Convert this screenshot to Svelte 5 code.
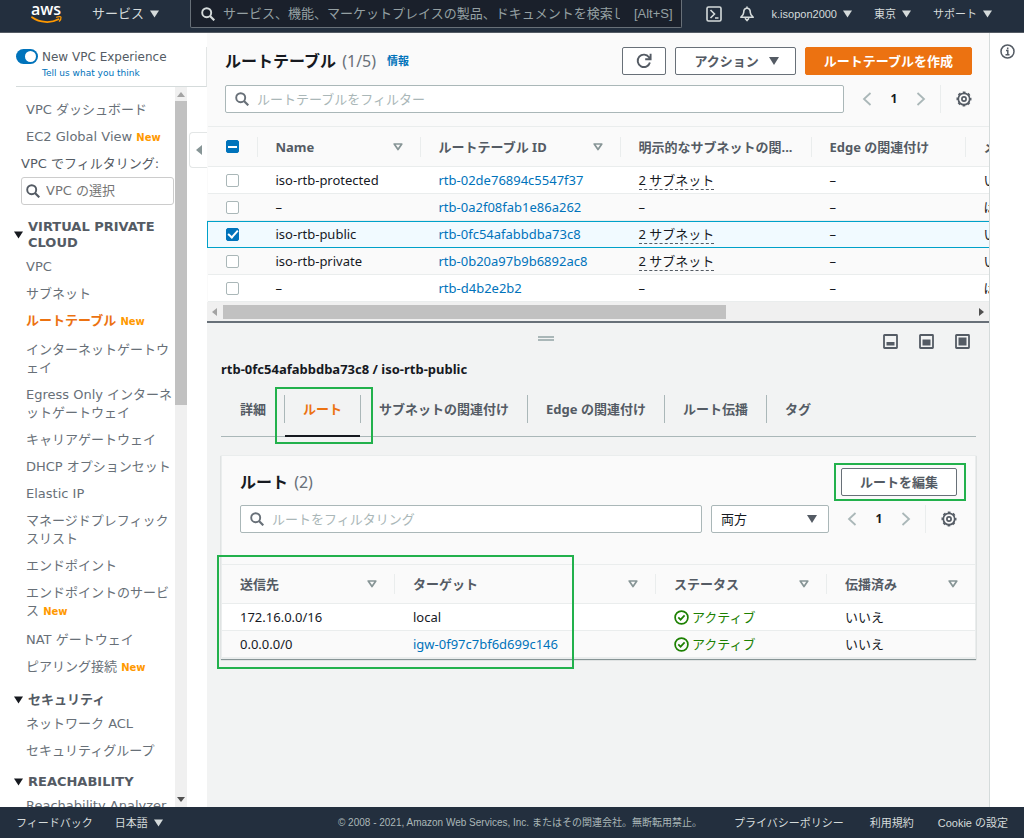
<script lang="ts">
  interface NavItem {
    label: string;
    isNew?: boolean;
    active?: boolean;
  }

  interface NavGroup {
    title: string;
    items: NavItem[];
  }

  interface RouteTable {
    name: string;
    id: string;
    subnets: string;
    edge: string;
    main: string;
    selected: boolean;
  }

  const topItems: NavItem[] = [
    { label: 'VPC ダッシュボード' },
    { label: 'EC2 Global View', isNew: true },
  ];

  const groups: NavGroup[] = [
    {
      title: 'VIRTUAL PRIVATE CLOUD',
      items: [
        { label: 'VPC' },
        { label: 'サブネット' },
        { label: 'ルートテーブル', isNew: true, active: true },
        { label: 'インターネットゲートウェイ' },
        { label: 'Egress Only インターネットゲートウェイ' },
        { label: 'キャリアゲートウェイ' },
        { label: 'DHCP オプションセット' },
        { label: 'Elastic IP' },
        { label: 'マネージドプレフィックスリスト' },
        { label: 'エンドポイント' },
        { label: 'エンドポイントのサービス', isNew: true },
        { label: 'NAT ゲートウェイ' },
        { label: 'ピアリング接続', isNew: true },
      ],
    },
    {
      title: 'セキュリティ',
      items: [{ label: 'ネットワーク ACL' }, { label: 'セキュリティグループ' }],
    },
    {
      title: 'REACHABILITY',
      items: [{ label: 'Reachability Analyzer' }],
    },
  ];

  let tables = $state<RouteTable[]>([
    { name: 'iso-rtb-protected', id: 'rtb-02de76894c5547f37', subnets: '2 サブネット', edge: '–', main: 'いいえ', selected: false },
    { name: '–', id: 'rtb-0a2f08fab1e86a262', subnets: '–', edge: '–', main: 'はい', selected: false },
    { name: 'iso-rtb-public', id: 'rtb-0fc54afabbdba73c8', subnets: '2 サブネット', edge: '–', main: 'いいえ', selected: true },
    { name: 'iso-rtb-private', id: 'rtb-0b20a97b9b6892ac8', subnets: '2 サブネット', edge: '–', main: 'いいえ', selected: false },
    { name: '–', id: 'rtb-d4b2e2b2', subnets: '–', edge: '–', main: 'はい', selected: false },
  ]);

  const routes = [
    { dest: '172.16.0.0/16', target: 'local', link: false },
    { dest: '0.0.0.0/0', target: 'igw-0f97c7bf6d699c146', link: true },
  ];

  const tabs = ['詳細', 'ルート', 'サブネットの関連付け', 'Edge の関連付け', 'ルート伝播', 'タグ'];
  let activeTab = $state('ルート');
  let newExperience = $state(true);

  const selectedCount = $derived(tables.filter((t) => t.selected).length);
</script>

{#snippet caret()}
  <svg class="caret" viewBox="0 0 10 8" width="10" height="8" aria-hidden="true"><path d="M0 0h10L5 8z" fill="currentColor" /></svg>
{/snippet}

{#snippet sortIcon()}
  <svg class="sort" viewBox="0 0 10 8" width="10" height="8" aria-hidden="true">
    <path d="M1.2 1h7.6L5 6.6z" fill="none" stroke="#879596" stroke-width="1.7" stroke-linejoin="round" />
  </svg>
{/snippet}

{#snippet searchIcon()}
  <svg viewBox="0 0 14 14" width="14" height="14" aria-hidden="true">
    <circle cx="5.7" cy="5.7" r="4.5" fill="none" stroke="currentColor" stroke-width="1.9" />
    <path d="M9 9l4.3 4.3" stroke="currentColor" stroke-width="2.2" />
  </svg>
{/snippet}

{#snippet pager()}
  <div class="pager">
    <button class="icon-btn" aria-label="前へ">
      <svg viewBox="0 0 10 14" width="10" height="14"><path d="M8.5 1L2 7l6.5 6" fill="none" stroke="#aab7b8" stroke-width="1.8" /></svg>
    </button>
    <span class="page-no">1</span>
    <button class="icon-btn" aria-label="次へ">
      <svg viewBox="0 0 10 14" width="10" height="14"><path d="M1.5 1L8 7l-6.5 6" fill="none" stroke="#aab7b8" stroke-width="1.8" /></svg>
    </button>
    <button class="icon-btn gear" aria-label="設定">
      <svg viewBox="0 0 16 16" width="16" height="16" fill="none" stroke="#545b64">
        <circle cx="8" cy="8" r="5.7" stroke-width="1.7" />
        <circle cx="8" cy="8" r="6.8" stroke-width="1.4" stroke-dasharray="2.8 2.54" stroke-dashoffset="1.4" />
        <circle cx="8" cy="8" r="2.1" stroke-width="1.7" />
      </svg>
    </button>
  </div>
{/snippet}

{#snippet navLink(item: NavItem)}
  <li class:has-new={item.isNew}>
    <a href="#nav" class:active={item.active}>{item.label}</a>
    {#if item.isNew}<span class="new">New</span>{/if}
  </li>
{/snippet}

<div class="console">
  <header class="topbar">
    <a class="logo" href="#home" aria-label="aws">
      <svg viewBox="0 0 32 26" width="32" height="26">
        <text x="0" y="15" class="logo-text">aws</text>
        <path d="M1 17.3C9 23 20 23.4 27.5 19.3" fill="none" stroke="#f90" stroke-width="1.8" stroke-linecap="round" />
        <path d="M25.5 17.2c2-.9 4.400-.7 4.500 0 .1 1-.6 3-1.700 4" fill="none" stroke="#f90" stroke-width="1.2" stroke-linecap="round" />
      </svg>
    </a>
    <button class="top-link services">サービス {@render caret()}</button>
    <label class="global-search">
      {@render searchIcon()}
      <input type="text" aria-label="検索" placeholder="サービス、機能、マーケットプレイスの製品、ドキュメントを検索します" />
      <span class="shortcut">[Alt+S]</span>
    </label>
    <div class="top-right">
      <button class="icon-btn" aria-label="CloudShell">
        <svg viewBox="0 0 16 16" width="16" height="16" fill="none" stroke="#d5dbdb" stroke-width="1.6">
          <rect x="1" y="1" width="14" height="14" rx="1.5" />
          <path d="M4.5 4l4 4-4 4M9 12h3.5" />
        </svg>
      </button>
      <button class="icon-btn" aria-label="通知">
        <svg viewBox="0 0 16 16" width="16" height="16" fill="none" stroke="#d5dbdb" stroke-width="1.6" stroke-linejoin="round">
          <path d="M8 2.2c2.5 0 3.300 2 3.300 4.300 0 2 1.200 3 2.900 4.700H1.800c1.700-1.700 2.900-2.700 2.900-4.700C4.700 4.200 5.500 2.200 8 2.200zM8 .5v2M6 12.200L8 14.600l2-2.400" />
        </svg>
      </button>
      <button class="top-link account">k.isopon2000 {@render caret()}</button>
      <button class="top-link region">東京 {@render caret()}</button>
      <button class="top-link">サポート {@render caret()}</button>
    </div>
  </header>

  <div class="body">
    <aside class="sidebar">
      <div class="experience">
        <input id="new-exp" class="switch" type="checkbox" role="switch" bind:checked={newExperience} />
        <div>
          <label for="new-exp">New VPC Experience</label>
          <a href="#feedback">Tell us what you think</a>
        </div>
      </div>
      <div class="side-main">
        <nav>
          <ul>
            {#each topItems as item (item.label)}
              {@render navLink(item)}
            {/each}
          </ul>
          <div class="vpc-filter">
            <label for="vpc-filter">VPC でフィルタリング:</label>
            <div class="vpc-box">
              {@render searchIcon()}
              <input id="vpc-filter" type="text" placeholder="VPC の選択" />
            </div>
          </div>
          {#each groups as group (group.title)}
            <h3>
              {@render caret()}
              <span>{group.title}</span>
            </h3>
            <ul>
              {#each group.items as item (item.label)}
                {@render navLink(item)}
              {/each}
            </ul>
          {/each}
        </nav>
        <div class="vscroll">
          <svg viewBox="0 0 8 5" width="8" height="5"><path d="M0 5l4-5 4 5z" fill="#a3a3a3" /></svg>
          <div class="vtrack"><div class="vthumb"></div></div>
          <svg viewBox="0 0 8 5" width="8" height="5"><path d="M0 0l4 5 4-5z" fill="#505050" /></svg>
        </div>
        <button class="fold" aria-label="サイドバーを閉じる">
          <svg viewBox="0 0 6 10" width="6" height="10"><path d="M6 0v10L0 5z" fill="#879596" /></svg>
        </button>
      </div>
    </aside>

    <main>
      <section class="list-panel">
        <div class="panel-head">
          <div class="title-row">
            <h1>ルートテーブル <span class="count">({selectedCount}/{tables.length})</span></h1>
            <a class="info" href="#info">情報</a>
            <div class="actions">
              <button class="btn refresh" aria-label="更新">
                <svg viewBox="0 0 16 16" width="16" height="16" fill="none" stroke="#545b64" stroke-width="1.9">
                  <path d="M13.9 9.400A6.200 6.200 0 1 1 13 4.300L14.200 5.800M14.600 .8v5.400H9.200" />
                </svg>
              </button>
              <button class="btn menu">アクション {@render caret()}</button>
              <button class="btn primary">ルートテーブルを作成</button>
            </div>
          </div>
          <div class="filter-row">
            <label class="filter">
              {@render searchIcon()}
              <input type="text" aria-label="フィルター" placeholder="ルートテーブルをフィルター" />
            </label>
            {@render pager()}
          </div>
        </div>

        <div class="table-clip">
          <table class="rt-table">
            <colgroup>
              <col class="c-check" /><col class="c-name" /><col class="c-id" /><col class="c-sub" /><col class="c-edge" /><col />
            </colgroup>
            <thead>
              <tr>
                <th><div class="cell"><input type="checkbox" class="check" aria-label="すべて選択" indeterminate={true} /></div></th>
                <th><div class="cell">Name {@render sortIcon()}</div></th>
                <th><div class="cell">ルートテーブル ID {@render sortIcon()}</div></th>
                <th><div class="cell">明示的なサブネットの関...</div></th>
                <th><div class="cell">Edge の関連付け</div></th>
                <th><div class="cell">メイン</div></th>
              </tr>
            </thead>
            <tbody>
              {#each tables as t (t.id)}
                <tr class:selected={t.selected}>
                  <td><input type="checkbox" class="check" aria-label={t.id} bind:checked={t.selected} /></td>
                  <td>{t.name}</td>
                  <td><a href="#rtb">{t.id}</a></td>
                  <td>{#if t.subnets !== '–'}<span class="dashed">{t.subnets}</span>{:else}–{/if}</td>
                  <td>{t.edge}</td>
                  <td>{t.main}</td>
                </tr>
              {/each}
            </tbody>
          </table>
        </div>
        <div class="hscroll">
          <svg viewBox="0 0 5 8" width="5" height="8"><path d="M5 0v8L0 4z" fill="#a3a3a3" /></svg>
          <div class="htrack"><div class="hthumb"></div></div>
          <svg viewBox="0 0 5 8" width="5" height="8"><path d="M0 0v8l5-4z" fill="#505050" /></svg>
        </div>
      </section>

      <section class="detail">
        <div class="split-bar">
          <span></span>
          <div class="grip"></div>
          <div class="split-icons">
            <button class="icon-btn" aria-label="小">
              <svg viewBox="0 0 15 15" width="15" height="15"><rect x="1" y="1" width="13" height="13" rx="0.5" fill="none" stroke="#545b64" stroke-width="1.8" /><path d="M3.5 8h8v3.5h-8z" fill="#545b64" /></svg>
            </button>
            <button class="icon-btn" aria-label="中">
              <svg viewBox="0 0 15 15" width="15" height="15"><rect x="1" y="1" width="13" height="13" rx="0.5" fill="none" stroke="#545b64" stroke-width="1.8" /><path d="M3.5 5.5h8v6h-8z" fill="#545b64" /></svg>
            </button>
            <button class="icon-btn" aria-label="大">
              <svg viewBox="0 0 15 15" width="15" height="15"><rect x="1" y="1" width="13" height="13" rx="0.5" fill="none" stroke="#545b64" stroke-width="1.8" /><path d="M3.5 3.5h8v8h-8z" fill="#545b64" /></svg>
            </button>
          </div>
        </div>
        <h2>rtb-0fc54afabbdba73c8 / iso-rtb-public</h2>

        <div class="tabs" role="tablist">
          {#each tabs as tab (tab)}
            <div class="tab">
              <button
                role="tab"
                aria-selected={tab === activeTab}
                class:active={tab === activeTab}
                onclick={() => { activeTab = tab; }}
              >{tab}</button>
              {#if tab === 'ルート'}<div class="mark mark-tab"></div>{/if}
            </div>
          {/each}
        </div>

        <div class="card">
          <div class="card-head">
            <div class="title-row">
              <h1>ルート <span class="count">({routes.length})</span></h1>
              <div class="actions">
                <button class="btn edit">ルートを編集</button>
                <div class="mark mark-edit"></div>
              </div>
            </div>
            <div class="filter-row">
              <label class="filter">
                {@render searchIcon()}
                <input type="text" aria-label="ルートをフィルタリング" placeholder="ルートをフィルタリング" />
              </label>
              <div class="select">
                <select aria-label="表示">
                  <option>両方</option>
                </select>
                {@render caret()}
              </div>
              {@render pager()}
            </div>
          </div>
          <div class="routes">
            <table>
              <colgroup><col class="r-dest" /><col class="r-target" /><col class="r-status" /><col /></colgroup>
              <thead>
                <tr>
                  <th><div class="cell">送信先 {@render sortIcon()}</div></th>
                  <th><div class="cell">ターゲット {@render sortIcon()}</div></th>
                  <th><div class="cell">ステータス {@render sortIcon()}</div></th>
                  <th><div class="cell">伝播済み {@render sortIcon()}</div></th>
                </tr>
              </thead>
              <tbody>
                {#each routes as r (r.dest)}
                  <tr>
                    <td>{r.dest}</td>
                    <td>{#if r.link}<a href="#igw">{r.target}</a>{:else}{r.target}{/if}</td>
                    <td>
                      <span class="status">
                        <svg viewBox="0 0 15 15" width="15" height="15" fill="none" stroke="#1d8102" stroke-width="1.7">
                          <circle cx="7.5" cy="7.5" r="6.4" />
                          <path d="M4.3 7.4l2.300 2.300 4-4.300" />
                        </svg>
                        アクティブ
                      </span>
                    </td>
                    <td>いいえ</td>
                  </tr>
                {/each}
              </tbody>
            </table>
            <div class="mark mark-routes"></div>
          </div>
        </div>
      </section>
    </main>

    <div class="info-rail">
      <button class="icon-btn" aria-label="情報パネル">
        <svg viewBox="0 0 15 15" width="15" height="15" fill="none" stroke="#545b64" stroke-width="1.5">
          <circle cx="7.5" cy="7.5" r="6.5" />
          <path d="M6 6.5h1.800v4M5.500 10.800h4M7.700 3.500v1.700" />
        </svg>
      </button>
    </div>
  </div>

  <footer>
    <a href="#feedback">フィードバック</a>
    <button class="top-link lang">日本語 {@render caret()}</button>
    <span class="copyright">© 2008 - 2021, Amazon Web Services, Inc. またはその関連会社。無断転用禁止。</span>
    <a class="privacy" href="#privacy">プライバシーポリシー</a>
    <a class="terms" href="#terms">利用規約</a>
    <a href="#cookie">Cookie の設定</a>
  </footer>
</div>

<style>
  :global(body) {
    margin: 0;
  }

  .console {
    display: grid;
    grid-template-rows: 33px minmax(0, 1fr) 31px;
    height: 100vh;
    overflow: hidden;
    font-family: 'Noto Sans', 'Noto Sans CJK JP', sans-serif;
    font-size: 13px;
    line-height: 18px;
    color: #16191f;
  }

  .console :global(*) {
    box-sizing: border-box;
  }

  svg {
    display: block;
    flex-shrink: 0;
  }

  a {
    color: #0073bb;
    text-decoration: none;
  }

  button,
  input,
  select {
    font: inherit;
    color: inherit;
    margin: 0;
  }

  button {
    padding: 0;
    border: none;
    background: none;
    cursor: pointer;
    white-space: nowrap;
  }

  h1,
  h2,
  h3,
  ul {
    margin: 0;
    padding: 0;
  }

  /* top bar */
  .topbar {
    display: flex;
    align-items: flex-start;
    padding: 0 32px 0 31px;
    background: #232f3e;
    border-bottom: 1px solid #545b64;
    color: #d5dbdb;
    font-family: 'Liberation Sans', 'Noto Sans CJK JP', sans-serif;
  }

  .logo svg {
    overflow: visible;
  }

  .logo-text {
    font-family: 'Open Sans', sans-serif;
    font-size: 16px;
    font-weight: 600;
    fill: #fff;
  }

  .top-link {
    display: flex;
    align-items: center;
    gap: 6px;
    height: 28px;
    font-size: 11px;
  }

  .top-link .caret {
    width: 9px;
  }

  .services {
    margin-left: 29px;
    font-size: 13px;
  }

  .global-search {
    display: flex;
    flex: 1;
    align-items: center;
    height: 28px;
    margin-left: 31px;
    padding: 0 8px 0 10px;
    background: #1a202b;
    border: 1px solid #687078;
    border-top: none;
    border-radius: 0 0 2px 2px;
  }

  .global-search input {
    flex: 1;
    min-width: 0;
    margin: 0 14px 0 8px;
    padding: 0;
    background: none;
    border: none;
    outline: none;
  }

  .global-search input::placeholder {
    color: #95a0a3;
    opacity: 1;
  }

  .shortcut {
    color: #95a0a3;
  }

  .top-right {
    display: flex;
    align-items: center;
    height: 28px;
    padding-left: 24px;
  }

  .top-right .icon-btn {
    margin-right: 17px;
  }

  .account,
  .region {
    margin-right: 22px;
  }

  .icon-btn {
    display: flex;
    align-items: center;
    justify-content: center;
  }

  .body {
    display: grid;
    grid-template-columns: 207px minmax(0, 1fr) 34px;
    min-height: 0;
  }

  /* sidebar */
  .sidebar {
    display: flex;
    flex-direction: column;
    min-height: 0;
    color: #545b64;
    font-family: 'DejaVu Sans', 'Noto Sans CJK JP', sans-serif;
    background: #fff;
  }

  .experience {
    display: flex;
    gap: 4px;
    height: 40px;
    margin: 14px 0 0 16px;
    padding-top: 2px;
    border-right: 1px solid #e3e6e6;
    border-bottom: 1px solid #d5dbdb;
  }

  .experience label,
  .experience a {
    display: block;
    font-size: 12px;
    line-height: 16px;
  }

  .experience a {
    font-size: 9px;
  }

  .switch {
    display: flex;
    flex-shrink: 0;
    appearance: none;
    width: 22px;
    height: 15px;
    padding: 2px;
    background: #0073bb;
    border-radius: 8px;
  }

  .switch::after {
    content: '';
    width: 11px;
    height: 11px;
    margin-left: auto;
    background: #fff;
    border-radius: 50%;
  }

  .side-main {
    display: grid;
    grid-template-columns: minmax(0, 1fr) 12px 20px;
    flex: 1;
    min-height: 0;
  }

  nav {
    overflow: hidden;
    padding: 14px 0 0 14px;
  }

  nav ul {
    list-style: none;
    padding-left: 12px;
  }

  nav li {
    padding-bottom: 9px;
    line-height: 18px;
  }

  nav h3 + ul .has-new {
    padding-bottom: 11px;
  }

  nav li a {
    color: #687078;
  }

  nav li a.active {
    color: #ec7211;
    font-weight: 700;
  }

  .new {
    color: #ff9900;
    font-size: 10px;
    font-weight: 700;
    line-height: 12px;
  }

  .vpc-filter {
    padding: 0 1px 14px 7px;
  }

  .vpc-filter label {
    display: block;
    margin-bottom: 4px;
  }

  .vpc-box {
    display: flex;
    align-items: center;
    gap: 6px;
    height: 28px;
    padding: 0 4px;
    border: 1px solid #ccc;
    border-radius: 3px;
  }

  .vpc-box input {
    width: 100%;
    min-width: 0;
    padding: 0;
    border: none;
    outline: none;
  }

  .vpc-box input::placeholder {
    color: #757575;
  }

  nav h3 {
    display: flex;
    align-items: center;
    gap: 5px;
    margin-bottom: 7px;
    font-size: 13px;
    line-height: 16px;
  }

  nav h3 .caret {
    width: 9px;
    color: #16191f;
  }

  nav ul + h3 {
    padding-top: 5px;
  }

  .vscroll {
    display: flex;
    flex-direction: column;
    align-items: center;
    gap: 4px;
    padding: 5px 0;
    background: #f0f0f0;
  }

  .vtrack {
    flex: 1;
    width: 100%;
  }

  .vthumb {
    height: 44%;
    background: #c1c1c1;
  }

  .fold {
    display: flex;
    align-items: center;
    height: 36px;
    margin: 45px 0 0 2px;
    padding-left: 6px;
    border: 1px solid #e3e6e6;
    border-right: none;
    border-radius: 4px 0 0 4px;
  }

  /* main */
  main {
    display: flex;
    flex-direction: column;
    min-height: 0;
    background: #f2f3f3;
    border-right: 1px solid #d5dbdb;
  }

  .list-panel {
    background: #fafafa;
    border-bottom: 2px solid #687078;
  }

  .panel-head {
    padding: 14px 17px 13px 18px;
  }

  .title-row {
    display: flex;
    align-items: center;
    height: 28px;
  }

  h1 {
    font-size: 16px;
    line-height: 24px;
    white-space: nowrap;
  }

  .count {
    margin-left: 2px;
    color: #687078;
    font-weight: 400;
  }

  .info {
    margin-left: 11px;
    font-size: 11px;
    font-weight: 700;
  }

  .actions {
    position: relative;
    display: flex;
    gap: 9px;
    margin-left: auto;
  }

  .btn {
    display: flex;
    align-items: center;
    justify-content: center;
    height: 28px;
    padding: 0 18px;
    background: #fff;
    border: 1px solid #687078;
    border-radius: 2px;
    color: #545b64;
    font-weight: 700;
  }

  .refresh {
    padding: 0 13px;
  }

  .menu {
    gap: 10px;
    padding: 0 16px 0 18px;
  }

  .primary {
    background: #ec7211;
    border-color: #ec7211;
    color: #fff;
  }

  .filter-row {
    display: flex;
    gap: 9px;
    margin-top: 10px;
  }

  .filter {
    display: flex;
    flex: 1;
    align-items: center;
    gap: 8px;
    height: 28px;
    padding: 0 9px;
    background: #fff;
    border: 1px solid #aab7b8;
    border-radius: 2px;
    color: #687078;
  }

  .filter input {
    flex: 1;
    min-width: 0;
    padding: 0;
    border: none;
    outline: none;
  }

  .filter input::placeholder {
    color: #aab7b8;
    opacity: 1;
  }

  .pager {
    display: flex;
    align-items: center;
    width: 119px;
    padding-left: 9px;
  }

  .page-no {
    flex: 1;
    font-size: 12px;
    font-weight: 700;
    text-align: center;
  }

  .gear {
    height: 28px;
    margin-left: 14px;
    padding-left: 15px;
    border-left: 1px solid #eaeded;
  }

  /* tables */
  .table-clip {
    overflow: hidden;
  }

  table {
    width: 100%;
    border-collapse: collapse;
    table-layout: fixed;
  }

  .rt-table {
    width: 150%;
  }

  .c-check {
    width: 50px;
  }

  .c-name {
    width: 163px;
  }

  .c-id {
    width: 200px;
  }

  .c-sub {
    width: 191px;
  }

  .c-edge {
    width: 154px;
  }

  th {
    height: 39px;
    padding: 0;
    border-top: 1px solid #eaeded;
    border-bottom: 1px solid #eaeded;
    color: #545b64;
    text-align: left;
    white-space: nowrap;
  }

  .rt-table th {
    height: 40px;
  }

  th .cell {
    display: flex;
    align-items: center;
    justify-content: space-between;
    height: 20px;
    padding: 0 17px 0 18px;
    border-right: 1px solid #eaeded;
  }

  th:last-child .cell {
    border-right: none;
  }

  td {
    height: 27px;
    padding: 0 18px;
    background: #fff;
    border-bottom: 1px solid #eaeded;
    line-height: 18px;
    white-space: nowrap;
  }

  tbody tr:nth-child(even) td {
    background: #fafafa;
  }

  .rt-table tbody tr.selected td {
    background: #f1faff;
    border-bottom: 1px solid #00a1c9;
    box-shadow: inset 0 1px 0 #00a1c9;
  }

  .rt-table tbody tr.selected td:first-child {
    border-left: 1px solid #00a1c9;
  }

  .dashed {
    display: inline-block;
    border-bottom: 1px dashed #545b64;
  }

  .check {
    display: grid;
    place-items: center;
    appearance: none;
    width: 13px;
    height: 13px;
    background: #fff;
    border: 1px solid #aab7b8;
    border-radius: 2px;
  }

  .check:checked,
  .check:indeterminate {
    background: #0073bb;
    border-color: #0073bb;
  }

  .check:checked::after {
    content: '';
    width: 8px;
    height: 4px;
    margin-bottom: 2px;
    border: solid #fff;
    border-width: 0 0 2px 2px;
    transform: rotate(-48deg);
  }

  .check:indeterminate::after {
    content: '';
    width: 9px;
    height: 2px;
    background: #fff;
  }

  .hscroll {
    display: flex;
    align-items: center;
    height: 19px;
    padding: 0 5px;
    background: #f0f0f0;
  }

  .htrack {
    flex: 1;
    margin: 0 5px 0 6px;
  }

  .hthumb {
    width: 67%;
    height: 14px;
    background: #c1c1c1;
  }

  /* detail panel */
  .detail {
    flex: 1;
    min-height: 0;
    padding: 0 13px 0 14px;
  }

  .split-bar {
    display: grid;
    grid-template-columns: 3fr 16px 4fr;
    height: 36px;
  }

  .grip {
    height: 5px;
    margin-top: 13px;
    border: solid #aab7b8;
    border-width: 2px 0;
  }

  .split-icons {
    display: flex;
    align-items: center;
    justify-content: flex-end;
    gap: 21px;
    padding-right: 6px;
  }

  h2 {
    font-size: 13px;
    line-height: 20px;
  }

  .tabs {
    display: flex;
    align-items: flex-start;
    height: 58px;
    padding: 16px 0 0 1px;
    border-bottom: 1px solid #aab7b8;
  }

  .tab {
    position: relative;
    height: 28px;
    border-right: 1px solid #aab7b8;
  }

  .tab:last-child {
    border-right: none;
  }

  .tab button {
    height: 42px;
    padding: 0 18px 12px;
    border-bottom: 2px solid transparent;
    color: #545b64;
    font-weight: 700;
  }

  .tab button.active {
    border-color: #16191f;
    color: #ec7211;
  }

  .card {
    margin-top: 18px;
    background: #fafafa;
    border: 1px solid #eaeded;
    box-shadow: 0 1px 1px #879596;
  }

  .card-head {
    padding: 12px 18px 31px;
  }

  .card-head .filter-row {
    margin-top: 9px;
  }

  .select {
    display: grid;
    align-items: center;
    width: 118px;
  }

  .select select,
  .select .caret {
    grid-area: 1 / 1;
  }

  .select select {
    appearance: none;
    height: 28px;
    padding: 0 9px;
    background: #fff;
    border: 1px solid #aab7b8;
    border-radius: 2px;
  }

  .select .caret {
    justify-self: end;
    margin-right: 12px;
    color: #545b64;
    pointer-events: none;
  }

  .routes {
    position: relative;
  }

  .r-dest {
    width: 173px;
  }

  .r-target {
    width: 261px;
  }

  .r-status {
    width: 171px;
  }

  .status {
    display: flex;
    align-items: center;
    gap: 3px;
    color: #1d8102;
  }

  /* highlight frames drawn over the console */
  .mark {
    position: absolute;
    border: 2px solid #22b14c;
    pointer-events: none;
  }

  .mark-tab {
    inset: -8px -13px -21px -10px;
  }

  .mark-edit {
    inset: -5px -9px -5px -7px;
  }

  .mark-routes {
    inset: -9px auto -11px -5px;
    width: 357px;
  }

  .info-rail {
    display: flex;
    justify-content: center;
    align-items: flex-start;
    padding-top: 11px;
    background: #fff;
  }

  footer {
    display: flex;
    align-items: center;
    padding: 0 16px;
    background: #232f3e;
    color: #d5dbdb;
    font-family: 'Liberation Sans', 'Noto Sans CJK JP', sans-serif;
    font-size: 11px;
    white-space: nowrap;
  }

  footer a {
    color: #d5dbdb;
  }

  .lang {
    margin-left: 22px;
  }

  .copyright {
    margin-left: auto;
    color: #aab7b8;
    font-size: 10px;
  }

  .privacy {
    margin: 0 26px 0 32px;
  }

  .terms {
    margin-right: 24px;
  }
</style>
